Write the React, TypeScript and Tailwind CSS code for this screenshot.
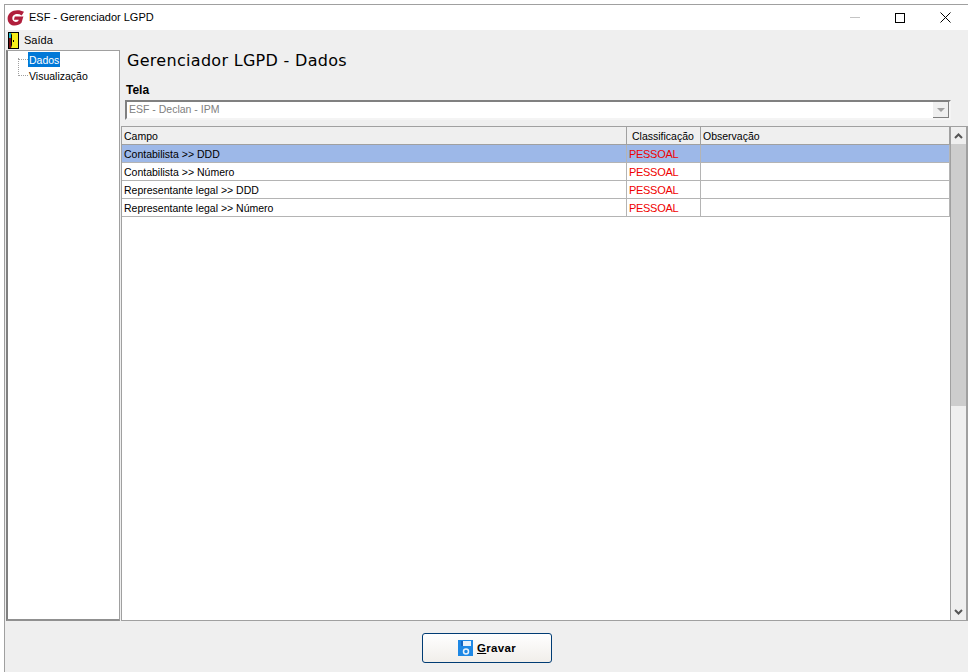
const font = { fontFamily: '"Liberation Sans", Arial, sans-serif' };
const headingFont = { fontFamily: '"DejaVu Sans", sans-serif' };

const rows = [
  { campo: "Contabilista >> DDD", selected: true },
  { campo: "Contabilista >> Número", selected: false },
  { campo: "Representante legal >> DDD", selected: false },
  { campo: "Representante legal >> Número", selected: false },
];

function Logo() {
  return (
    <svg width="18" height="16" viewBox="0 0 18 16" className="shrink-0">
      <path d="M17 1.8C15 .8 13 .2 10.5 .2 5 .2 .6 3.6 .6 8.4c0 4.2 3 7.2 7.2 7.2 2.6 0 4.8-1 6.7-2.8L16.4 6.4H7.8L6.9 9.8h4.8l-.4 1.2c-.7.6-1.6 .9-2.6 .9-2 0-3.4-1.5-3.4-3.6 0-2.5 2.2-4.3 5-4.3 1.5 0 3 .5 4.4 1.4z" fill="#b01e3c" />
    </svg>
  );
}

function DoorIcon() {
  return (
    <svg width="11" height="17" viewBox="0 0 11 17" className="shrink-0">
      <rect x="0" y="0" width="11" height="17" fill="#000" />
      <rect x="1" y="1" width="2" height="5" fill="#1fb6c8" />
      <rect x="1" y="6" width="2" height="10" fill="#7a1010" />
      <path d="M3 1 H10 V16 H3 L4 13 V3z" fill="#f7ee1a" />
      <rect x="5" y="8" width="1" height="2" fill="#000" />
    </svg>
  );
}

function SaveIcon() {
  return (
    <svg width="15" height="16" viewBox="0 0 15 16" className="shrink-0">
      <path d="M0 0H15V16H0z" fill="#1e88e5" />
      <rect x="3" y="1" width="10" height="5" fill="#e8f2fb" />
      <rect x="3" y="1" width="2" height="5" fill="#1565c0" />
      <circle cx="8" cy="11.5" r="2.5" fill="none" stroke="#e8f2fb" strokeWidth="1.5" />
    </svg>
  );
}

export default function App() {
  return (
    <div className="w-[968px] h-[672px] overflow-hidden bg-white pt-1 text-black text-[10.5px]" style={font}>
      <div className="h-[668px] ml-1 border-l border-t border-[#a0a0a0] bg-[#efefef] flex flex-col">
        <div className="h-[25px] shrink-0 bg-white flex items-center pl-[2px]">
          <Logo />
          <span className="ml-[4px] text-[11px]">ESF - Gerenciador LGPD</span>
          <div className="ml-auto flex items-center pr-[17px]">
            <div className="w-[10px] h-px bg-[#c4c4c4] mr-[35px]" />
            <div className="w-[10px] h-[10px] border border-black mr-[35px]" />
            <svg width="11" height="11" viewBox="0 0 11 11"><path d="M.5.5l10 10M10.5.5l-10 10" stroke="#000" fill="none" /></svg>
          </div>
        </div>

        <div className="h-[20px] shrink-0 flex items-center pl-[3px]">
          <DoorIcon />
          <span className="ml-[5px] text-[11px]">Saída</span>
        </div>

        <div className="flex h-[571px] shrink-0 pl-[1px]">
          <div className="w-[114px] shrink-0 bg-white border border-[#a0a0a0] border-l-2 border-b-2 border-l-[#808080] border-b-[#909090] pt-[1px] relative">
            <div className="absolute left-[10px] top-[7px] h-[18px] w-px border-l border-dotted border-[#a0a0a0]" />
            <div className="absolute left-[10px] top-[8px] w-[10px] h-px border-t border-dotted border-[#a0a0a0]" />
            <div className="absolute left-[10px] top-[24px] w-[10px] h-px border-t border-dotted border-[#a0a0a0]" />
            <div className="ml-[20px] w-fit px-[1px] h-[15px] leading-[16px] bg-[#0078d7] text-white">Dados</div>
            <div className="ml-[20px] w-fit px-[1px] mt-px h-[15px] leading-[17px]">Visualização</div>
          </div>

          <div className="flex-1 min-w-0 pl-px flex flex-col">
            <div className="h-[76px] shrink-0 pl-[4px]">
              <div className="pt-[2px] pl-[2px] h-[30px] text-[16px] leading-[18px] tracking-[0.3px]" style={headingFont}>Gerenciador LGPD - Dados</div>
              <div className="mt-[3px] pl-px font-bold h-[14px] leading-[14px] text-[12px]">Tela</div>
              <div className="mt-[3px] mr-[17px] h-[20px] bg-white border-2 border-[#808080] border-r-[#f4f4f4] border-b-[#f4f4f4] flex items-center relative">
                <span className="pl-[2px] text-[#808080]">ESF - Declan - IPM</span>
                <div className="absolute right-0 top-0 w-[16px] h-[16px] bg-[#efefef] border-r border-b border-[#808080] flex items-center justify-center">
                  <div className="w-0 h-0 border-l-[4px] border-r-[4px] border-t-[4px] border-l-transparent border-r-transparent border-t-[#a0a0a0]" />
                </div>
              </div>
            </div>

            <div className="flex-1 min-h-0 bg-white border border-[#a0a0a0] border-r-2 flex">
              <div className="flex-1 min-w-0">
                <div className="flex h-[18px] bg-[#efefef] border-b border-[#a0a0a0]">
                  <div className="w-[505px] pl-[2px] leading-[18px] border-r border-[#a0a0a0]">Campo</div>
                  <div className="w-[74px] pl-[5px] leading-[18px] border-r border-[#a0a0a0]">Classificação</div>
                  <div className="flex-1 pl-[2px] leading-[18px] border-r border-[#a0a0a0]">Observação</div>
                </div>
                {rows.map((r) => (
                  <div key={r.campo} className={`flex h-[18px] border-b border-[#b4b4b4] ${r.selected ? "bg-[#9db8e8]" : "bg-white"}`}>
                    <div className="w-[505px] pl-[2px] leading-[18px] border-r border-[#b4b4b4]">{r.campo}</div>
                    <div className="w-[74px] pl-[2px] leading-[19px] text-[#f00000] text-[11px] tracking-[-0.3px] border-r border-[#b4b4b4]">PESSOAL</div>
                    <div className="flex-1 border-r border-[#b4b4b4]" />
                  </div>
                ))}
              </div>
              <div className="w-[16px] shrink-0 bg-[#efefef] flex flex-col border-l border-[#a0a0a0]">
                <div className="h-[17px] flex items-center justify-center">
                  <svg width="9" height="6" viewBox="0 0 9 6"><path d="M1 5l3.5-3.5L8 5" stroke="#555" strokeWidth="2" fill="none" /></svg>
                </div>
                <div className="h-[262px] bg-[#cdcdcd]" />
                <div className="flex-1" />
                <div className="h-[17px] flex items-center justify-center">
                  <svg width="9" height="6" viewBox="0 0 9 6"><path d="M1 1l3.5 3.5L8 1" stroke="#555" strokeWidth="2" fill="none" /></svg>
                </div>
              </div>
            </div>
          </div>
        </div>

        <div className="flex-1 flex items-start justify-center pt-[12px] pl-[1px]">
          <button className="w-[130px] h-[30px] rounded-[3px] border border-[#003c74] bg-gradient-to-b from-white to-[#f1eeea] flex items-center justify-center">
            <SaveIcon />
            <span className="ml-[4px] font-bold text-[11.5px] leading-[16px] tracking-[0.3px]"><u>G</u>ravar</span>
          </button>
        </div>
      </div>
    </div>
  );
}
